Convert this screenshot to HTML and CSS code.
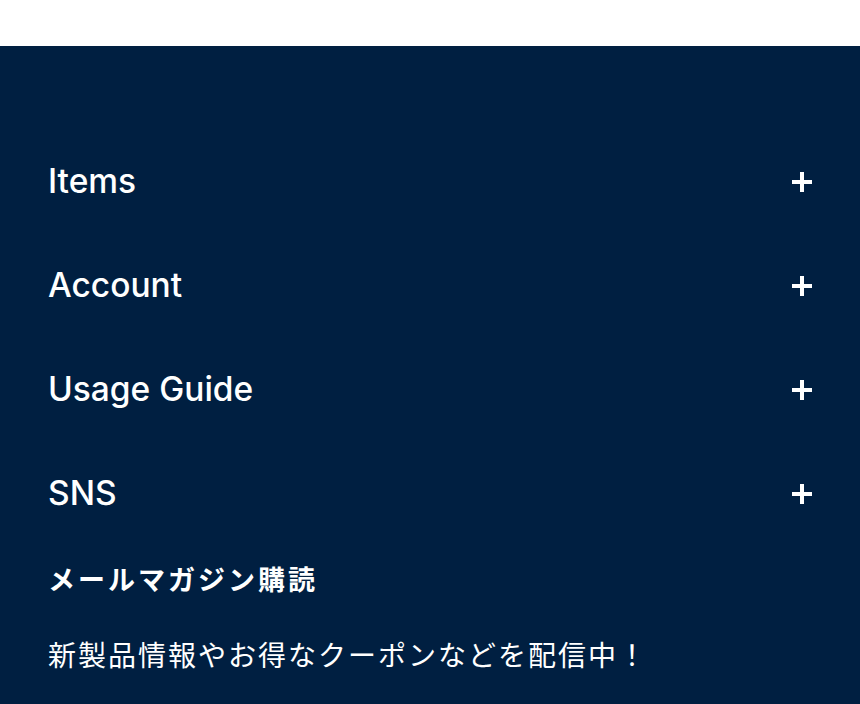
FILE: index.html
```html
<!DOCTYPE html>
<html lang="ja">
<head>
<meta charset="utf-8">
<link rel="stylesheet" href="styles.css">
</head>
<body>
<div class="topbar"></div>
<footer class="footer">
  <div class="acc-row"><span class="acc-title">Items</span><span class="plus"></span></div>
  <div class="acc-row"><span class="acc-title">Account</span><span class="plus"></span></div>
  <div class="acc-row"><span class="acc-title">Usage Guide</span><span class="plus"></span></div>
  <div class="acc-row"><span class="acc-title">SNS</span><span class="plus"></span></div>
  <div class="mail">
    <h2 class="mail-title">メールマガジン購読</h2>
    <p class="mail-text">新製品情報やお得なクーポンなどを配信中！</p>
  </div>
</footer>
</body>
</html>
```
FILE: styles.css
```css
html, body {
  margin: 0;
  padding: 0;
  background: #ffffff;
}
body {
  font-family: "Inter", "Noto Sans CJK JP", sans-serif;
  color: #ffffff;
  overflow: hidden;
}
.topbar {
  height: 46px;
  background: #ffffff;
}
.footer {
  background: #001f41;
  padding: 84px 48px 20px 48px;
  min-height: 658px;
  box-sizing: border-box;
}
.acc-row {
  height: 104px;
  display: flex;
  align-items: center;
  justify-content: space-between;
}
.acc-title {
  font-size: 33.5px;
  font-weight: 500;
  line-height: 1;
}
.plus {
  position: relative;
  width: 20px;
  height: 20px;
}
.plus::before,
.plus::after {
  content: "";
  position: absolute;
  background: #ffffff;
}
.plus::before {
  left: 0;
  top: 8px;
  width: 20px;
  height: 4px;
}
.plus::after {
  left: 8px;
  top: 0;
  width: 4px;
  height: 20px;
}
.mail-title {
  margin: 18px 0 0 0;
  font-family: "Noto Sans CJK JP", sans-serif;
  font-size: 27px;
  font-weight: 700;
  letter-spacing: 3px;
  line-height: 30px;
}
.mail-text {
  margin: 44px 0 0 0;
  font-family: "Noto Sans CJK JP", sans-serif;
  font-size: 28px;
  font-weight: 400;
  letter-spacing: 2px;
  line-height: 32px;
}
```
